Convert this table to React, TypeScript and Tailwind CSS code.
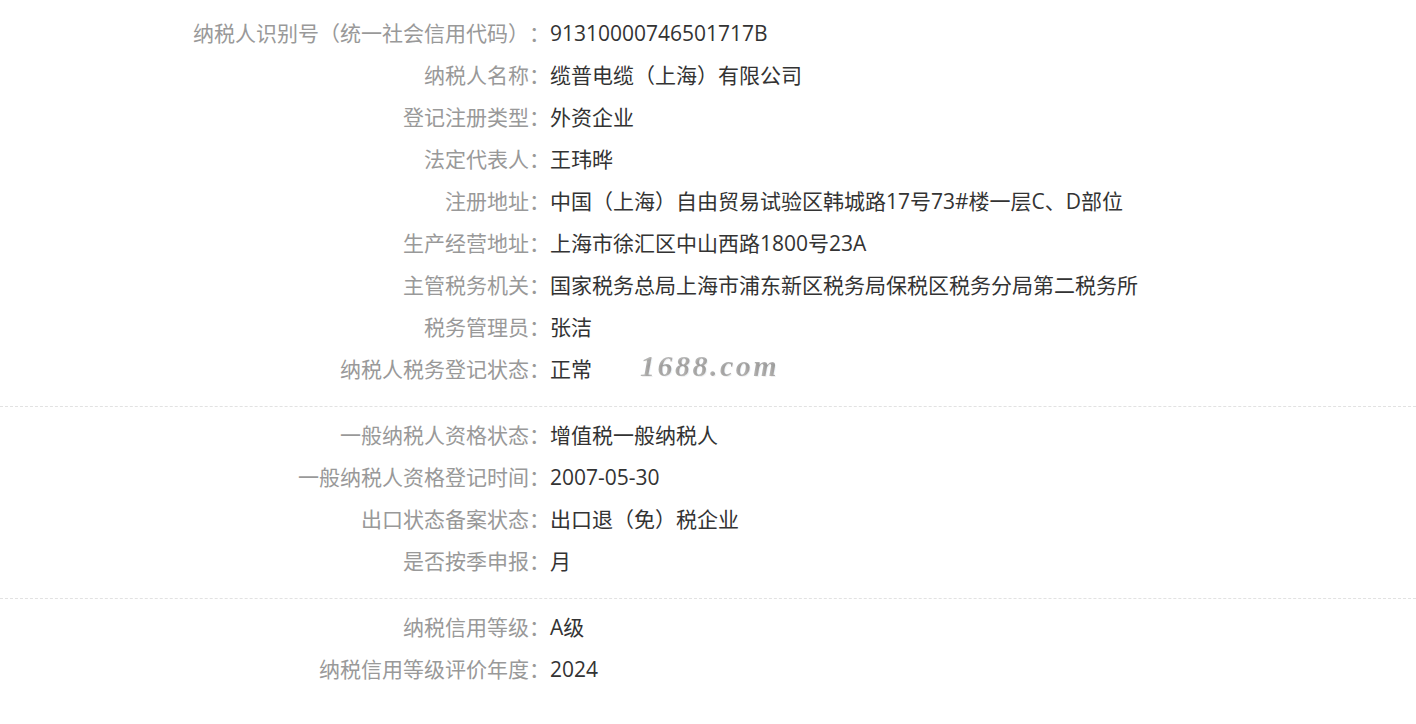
import React from "react";

interface Row {
  label: string;
  value: string;
}

const sections: Row[][] = [
  [
    { label: "纳税人识别号（统一社会信用代码）", value: "91310000746501717B" },
    { label: "纳税人名称", value: "缆普电缆（上海）有限公司" },
    { label: "登记注册类型", value: "外资企业" },
    { label: "法定代表人", value: "王玮晔" },
    { label: "注册地址", value: "中国（上海）自由贸易试验区韩城路17号73#楼一层C、D部位" },
    { label: "生产经营地址", value: "上海市徐汇区中山西路1800号23A" },
    { label: "主管税务机关", value: "国家税务总局上海市浦东新区税务局保税区税务分局第二税务所" },
    { label: "税务管理员", value: "张洁" },
    { label: "纳税人税务登记状态", value: "正常" },
  ],
  [
    { label: "一般纳税人资格状态", value: "增值税一般纳税人" },
    { label: "一般纳税人资格登记时间", value: "2007-05-30" },
    { label: "出口状态备案状态", value: "出口退（免）税企业" },
    { label: "是否按季申报", value: "月" },
  ],
  [
    { label: "纳税信用等级", value: "A级" },
    { label: "纳税信用等级评价年度", value: "2024" },
  ],
];

export default function App() {
  return (
    <div className="relative min-h-[724px] w-full bg-white pt-[5px] font-['Open_Sans','Noto_Sans_CJK_SC',sans-serif] text-[21px] [text-spacing-trim:space-all]">
      {sections.map((rows, si) => (
        <section
          key={si}
          className={`pt-2 ${si < sections.length - 1 ? "border-b border-dashed border-[#e2e2e2] pb-[15px]" : ""}`}
        >
          {rows.map((r) => (
            <div key={r.label} className="flex h-[42px] items-center">
              <div className="w-[550px] shrink-0 text-right text-[#999999]">{r.label}：</div>
              <div className="text-[#333333]">{r.value}</div>
            </div>
          ))}
        </section>
      ))}
      {/* watermark */}
      <span className="pointer-events-none absolute left-[640px] top-[343px] bg-gradient-to-b from-[#d0d0d0] via-[#a8a8a8] to-[#c4c4c4] bg-clip-text font-['Liberation_Serif',serif] text-[30px] font-bold italic tracking-[2.5px] text-transparent [text-shadow:1px_1px_0_rgba(0,0,0,0.06)]">
        1688.com
      </span>
    </div>
  );
}
